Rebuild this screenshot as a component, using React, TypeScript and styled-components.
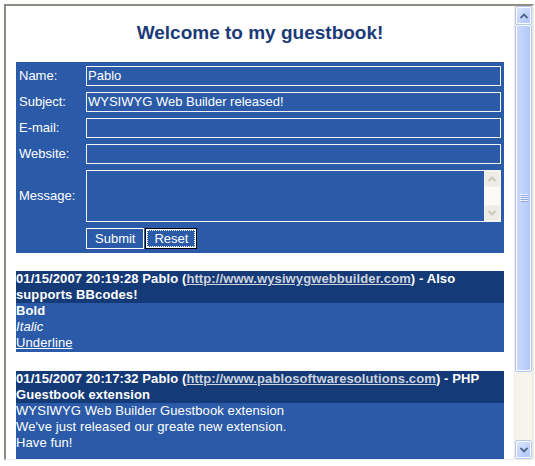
import React from "react";
import styled, { createGlobalStyle } from "styled-components";

const Global = createGlobalStyle`
  html, body { margin: 0; padding: 0; background: #ffffff; }
  body { width: 535px; height: 466px; overflow: hidden; font-family: "Liberation Sans", Arial, sans-serif; }
`;

const Frame = styled.div`
  margin: 4px 1px 0 4px;
  height: 456px;
  display: flex;
  border-top: 2px solid #8e8c84;
  border-left: 2px solid #8e8c84;
  border-right: 2px solid #ecebe6;
  border-bottom: 1px solid #ecebe6;
  box-sizing: border-box;
`;

const Content = styled.div`
  flex: 1;
  overflow: hidden;
  background: #ffffff;
  padding: 0 10px 0 10px;
`;

const Title = styled.h1`
  margin: 0;
  padding: 16px 0 0 0;
  height: 40px;
  text-align: center;
  font-size: 19px;
  font-weight: bold;
  color: #1b3a78;
  line-height: 22px;
`;

const FormPanel = styled.form`
  background: #2b5ba8;
  padding: 4px 3px 4px 3px;
  display: grid;
  grid-template-columns: 67px 1fr;
  row-gap: 6px;
  align-items: center;
  margin: 0 0 18px 0;
`;

const Label = styled.label`
  color: #ffffff;
  font-size: 13px;
  line-height: 16px;
`;

const TextInput = styled.div`
  height: 20px;
  box-sizing: border-box;
  border: 1px solid #f4f4f4;
  color: #ffffff;
  font-size: 13px;
  line-height: 18px;
  padding-left: 1px;
  white-space: nowrap;
  overflow: hidden;
`;

const MessageBox = styled.div`
  height: 52px;
  box-sizing: border-box;
  border: 1px solid #f4f4f4;
  display: flex;
  justify-content: flex-end;
`;

const MiniScroll = styled.div`
  width: 16px;
  background: #fbfaf6;
  display: flex;
  flex-direction: column;
  justify-content: space-between;
`;

const MiniBtn = styled.div`
  height: 16px;
  box-sizing: border-box;
  border: 1px solid #f2f1ec;
  background: #ecebe4;
  display: flex;
  align-items: center;
  justify-content: center;
`;

const Buttons = styled.div`
  display: flex;
  gap: 1px;
  grid-column: 2;
`;

const Btn = styled.button<{ $focused?: boolean }>`
  height: 21px;
  box-sizing: border-box;
  background: #2b5ba8;
  color: #ffffff;
  font-family: "Liberation Sans", Arial, sans-serif;
  font-size: 13px;
  padding: 0 8px;
  margin: 0;
  line-height: 17px;
  border: 1px solid ${(p) => (p.$focused ? "#000000" : "#ffffff")};
  outline: ${(p) => (p.$focused ? "1px dotted #ffffff" : "none")};
  outline-offset: -3px;
  box-shadow: ${(p) => (p.$focused ? "inset 0 0 0 1px #ffffff" : "none")};
`;

const Entry = styled.div`
  margin-bottom: 19px;
  font-size: 13px;
  line-height: 16px;
  letter-spacing: 0.1px;
  color: #ffffff;
`;

const EntryHead = styled.div`
  background: #143a78;
  font-weight: bold;
`;

const EntryLink = styled.a`
  color: #cdd3dd;
  text-decoration: underline;
`;

const EntryBody = styled.div`
  background: #2b5ba8;
  padding-bottom: 1px;
  min-height: 48px;
`;

const Underline = styled.span`
  text-decoration: underline;
`;

const ScrollBar = styled.div`
  width: 17px;
  display: flex;
  flex-direction: column;
  background: #f6f4ec;
  border-left: 1px solid #eeede5;
`;

const SBtn = styled.div<{ $bottom?: boolean }>`
  height: 17px;
  box-sizing: border-box;
  border: 1px solid #ffffff;
  border-radius: 2px;
  background: linear-gradient(135deg, #dbe6fd 0%, #c0d2fb 60%, #b0c5f5 100%);
  box-shadow: 0 0 0 1px #b4c6ef;
  display: flex;
  align-items: center;
  justify-content: center;
  margin: 1px 1px ${(p) => (p.$bottom ? "1px" : "0")} 1px;
`;

const Thumb = styled.div`
  height: 346px;
  margin: 1px 1px 0 1px;
  box-sizing: border-box;
  border: 1px solid #ffffff;
  border-radius: 2px;
  box-shadow: 0 0 0 1px #b4c6ef;
  background: linear-gradient(90deg, #c9d8fc 0%, #bccffb 60%, #b3c8f6 100%);
  display: flex;
  align-items: center;
  justify-content: center;
`;

const Track = styled.div`
  flex: 1;
`;

const Chevron = ({ up, color }: { up?: boolean; color: string }) => (
  <svg width="8" height="6" viewBox="0 0 8 6">
    <path
      d={up ? "M0.5 5 L4 1.5 L7.5 5" : "M0.5 1 L4 4.5 L7.5 1"}
      fill="none"
      stroke={color}
      strokeWidth="1.8"
    />
  </svg>
);

const Grip = () => (
  <svg width="8" height="8" viewBox="0 0 8 8">
    {[0, 2, 4, 6].map((y) => (
      <line key={y} x1="0" x2="8" y1={y + 0.5} y2={y + 0.5} stroke="#eef3ff" strokeWidth="1" />
    ))}
    {[1, 3, 5, 7].map((y) => (
      <line key={y} x1="1" x2="8" y1={y + 0.5} y2={y + 0.5} stroke="#8ca6e0" strokeWidth="1" />
    ))}
  </svg>
);

export default function App() {
  return (
    <>
      <Global />
      <Frame>
        <Content>
          <Title>Welcome to my guestbook!</Title>
          <FormPanel onSubmit={(e) => e.preventDefault()}>
            <Label>Name:</Label>
            <TextInput>Pablo</TextInput>
            <Label>Subject:</Label>
            <TextInput>WYSIWYG Web Builder released!</TextInput>
            <Label>E-mail:</Label>
            <TextInput />
            <Label>Website:</Label>
            <TextInput />
            <Label>Message:</Label>
            <MessageBox>
              <MiniScroll>
                <MiniBtn>
                  <Chevron up color="#c7c5b2" />
                </MiniBtn>
                <MiniBtn>
                  <Chevron color="#c7c5b2" />
                </MiniBtn>
              </MiniScroll>
            </MessageBox>
            <Buttons>
              <Btn type="button">Submit</Btn>
              <Btn type="button" $focused>
                Reset
              </Btn>
            </Buttons>
          </FormPanel>
          <Entry>
            <EntryHead>
              01/15/2007 20:19:28 Pablo (<EntryLink>http://www.wysiwygwebbuilder.com</EntryLink>) - Also
              supports BBcodes!
            </EntryHead>
            <EntryBody>
              <b>Bold</b>
              <br />
              <i>Italic</i>
              <br />
              <Underline>Underline</Underline>
            </EntryBody>
          </Entry>
          <Entry>
            <EntryHead>
              01/15/2007 20:17:32 Pablo (<EntryLink>http://www.pablosoftwaresolutions.com</EntryLink>) - PHP
              Guestbook extension
            </EntryHead>
            <EntryBody>
              WYSIWYG Web Builder Guestbook extension
              <br />
              We've just released our greate new extension.
              <br />
              Have fun!
              <br />
              &nbsp;
            </EntryBody>
          </Entry>
        </Content>
        <ScrollBar>
          <SBtn>
            <Chevron up color="#4d6185" />
          </SBtn>
          <Thumb>
            <Grip />
          </Thumb>
          <Track />
          <SBtn $bottom>
            <Chevron color="#4d6185" />
          </SBtn>
        </ScrollBar>
      </Frame>
    </>
  );
}
